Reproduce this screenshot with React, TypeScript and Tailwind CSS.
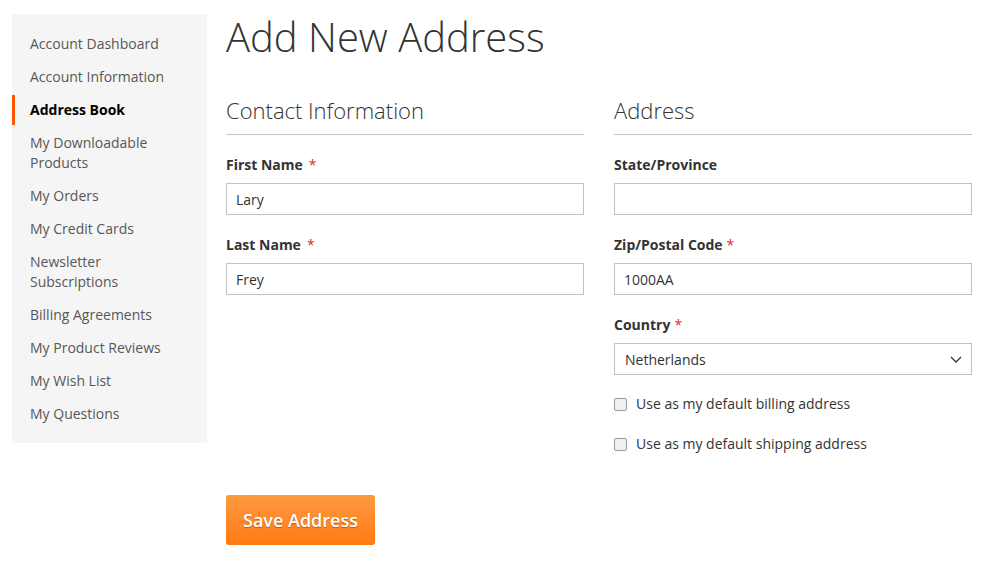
import React from 'react';

const navItems = [
  'Account Dashboard',
  'Account Information',
  'Address Book',
  'My Downloadable Products',
  'My Orders',
  'My Credit Cards',
  'Newsletter Subscriptions',
  'Billing Agreements',
  'My Product Reviews',
  'My Wish List',
  'My Questions',
];

function Field({ label, required, value }: { label: string; required?: boolean; value?: string }) {
  return (
    <div className="mb-[20px]">
      <label className="block text-[14px] font-bold text-[#333] leading-[20px] mb-[8px]">
        {label}
        {required && <span className="text-[#e02b27] font-normal ml-[6px]">*</span>}
      </label>
      <input
        type="text"
        defaultValue={value}
        className="block w-full h-[32px] border border-[#c2c2c2] bg-white px-[9px] text-[14px] text-[#333] outline-none"
      />
    </div>
  );
}

export default function App() {
  return (
    <div className="flex gap-[19px] bg-white min-h-[572px] pl-[12px] pt-[14px]" style={{ fontFamily: '"Open Sans", sans-serif' }}>
      <aside className="w-[195px] h-[429px] bg-[#f5f5f5] pt-[13.5px]">
        <ul>
          {navItems.map((item) => {
            const active = item === 'Address Book';
            return (
              <li
                key={item}
                className={`relative pl-[18px] pr-[30px] py-[6.5px] text-[14px] leading-[20px] ${active ? 'font-bold text-[#000]' : 'text-[#575757]'}`}
              >
                {active && <span className="absolute left-0 top-[1px] bottom-[2px] w-[3px] bg-[#ff5501]" />}
                {item}
              </li>
            );
          })}
        </ul>
      </aside>

      <main className="w-[746px]">
        <h1 className="text-[40px] font-light text-[#333] leading-[44px] mt-[1px] mb-[37px]">Add New Address</h1>
        <div className="grid grid-cols-2 gap-[30px]">
          <section>
            <h2 className="text-[22px] font-light text-[#333] leading-[28px] pb-[10px] border-b border-[#c6c6c6] mb-[20px]">
              Contact Information
            </h2>
            <Field label="First Name" required value="Lary" />
            <Field label="Last Name" required value="Frey" />
          </section>
          <section>
            <h2 className="text-[22px] font-light text-[#333] leading-[28px] pb-[10px] border-b border-[#c6c6c6] mb-[20px]">
              Address
            </h2>
            <Field label="State/Province" />
            <div className="mb-[20px]">
              <label className="block text-[14px] font-bold text-[#333] leading-[20px] mb-[8px]">
                Zip/Postal Code<span className="text-[#e02b27] font-normal ml-[4px]">*</span>
              </label>
              <input
                type="text"
                defaultValue="1000AA"
                className="block w-full h-[32px] border border-[#c2c2c2] bg-white px-[9px] text-[14px] text-[#333] outline-none"
              />
            </div>
            <div className="mb-[19px]">
              <label className="block text-[14px] font-bold text-[#333] leading-[20px] mb-[8px]">
                Country<span className="text-[#e02b27] font-normal ml-[4px]">*</span>
              </label>
              <div className="relative h-[32px] border border-[#c2c2c2] bg-white flex items-center px-[10px] text-[14px] text-[#333]">
                Netherlands
                <svg className="absolute right-[9px] top-[10px]" width="12" height="10" viewBox="0 0 12 10" fill="none">
                  <path d="M1 3l5 5 5-5" stroke="#333" strokeWidth="1.3" />
                </svg>
              </div>
            </div>
            <div className="flex items-center gap-[9px] text-[14px] text-[#333] leading-[20px] mb-[20px]">
              <span className="w-[13px] h-[13px] rounded-[2px] border border-[#9a9a9a] bg-[#f0f0f0]" />
              Use as my default billing address
            </div>
            <div className="flex items-center gap-[9px] text-[14px] text-[#333] leading-[20px]">
              <span className="w-[13px] h-[13px] rounded-[2px] border border-[#9a9a9a] bg-[#f0f0f0]" />
              Use as my default shipping address
            </div>
          </section>
        </div>
        <button
          type="button"
          className="mt-[41px] w-[149px] h-[50px] rounded-[3px] bg-gradient-to-b from-[#fd9a3e] to-[#ff7a10] text-white text-[18px] font-semibold [text-shadow:0_1px_1px_rgba(0,0,0,0.3)]"
        >
          Save Address
        </button>
      </main>
    </div>
  );
}
